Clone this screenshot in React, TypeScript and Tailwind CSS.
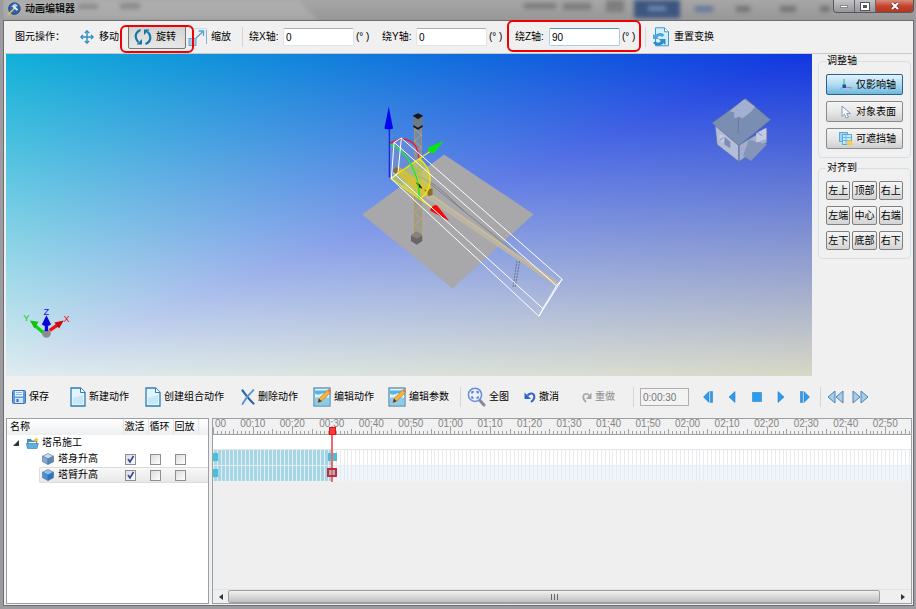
import { useState, type ReactNode } from "react";
import clsx from "clsx";

/* ---------- icons ---------- */

const AppIcon = () => (
  <svg viewBox="0 0 14 14" className="h-3.5 w-3.5 shrink-0">
    <circle cx="7.4" cy="6.6" r="5.8" fill="#2e62ab" stroke="#1c3f7c" strokeWidth=".8" />
    <path d="M4 4.5 8 1.5l3 2-2 1.5Z" fill="#a9d2f2" />
    <path d="M1 13 8 5.5" stroke="#d6c26a" strokeWidth="1.8" />
    <path d="m6.6 3.2 4.6 4.2-1.5 1.4-4.4-4Z" fill="#e8eef6" />
  </svg>
);

const MoveIcon = () => (
  <svg viewBox="0 0 14 14" className="h-3.5 w-3.5 shrink-0" fill="none" stroke="#2b8fc2" strokeWidth="1.4">
    <path d="M7 1.2v11.6M1.2 7h11.6" />
    <path d="M4.9 2.9 7 .9l2.1 2M4.9 11.1l2.1 2 2.1-2M2.9 4.9.9 7l2 2.1M11.1 4.9l2 2.1-2 2.1" />
  </svg>
);

const RotateIcon = () => (
  <svg viewBox="0 0 18 18" className="h-[18px] w-[18px] shrink-0" fill="none" stroke="#1577a8" strokeWidth="2.2">
    <path d="M6.5 2C3 3.5 1.4 6.2 1.8 9.2c.3 2.3 1.2 3.8 2.6 5.1" />
    <path d="M11.5 16c3.5-1.500 5.100-4.200 4.700-7.200-.3-2.300-1.200-3.800-2.600-5.100" />
    <path d="M2.500 16.500h5.500v-5.500ZM15.500 1.500h-5.500v5.500Z" fill="#1577a8" stroke="none" />
  </svg>
);

const ScaleIcon = () => (
  <svg viewBox="0 0 20 20" className="h-5 w-5 shrink-0" fill="none">
    <path d="M1 1.5h17.5V17" stroke="#c3dcef" />
    <path d="M18.5 3v14" stroke="#7fb2dc" />
    <rect x="1" y="11.5" width="7" height="7" fill="#a5cdea" stroke="#6aa5d2" />
    <path d="M8 11 15 4.5M10.5 4h5v5" stroke="#5c9bd0" strokeWidth="1.3" />
  </svg>
);

const ResetIcon = () => (
  <svg viewBox="0 0 18 20" className="h-5 w-[18px] shrink-0">
    <path d="M3.5.8h9l4 4v14h-13Z" fill="#d3edfb" stroke="#3c9bd0" />
    <path d="M12.500.8v4h4" fill="#fff" stroke="#3c9bd0" />
    <path d="M1 12V7l2 1.500C5.500 5.500 9.500 5 12.500 8l-2.500 2C8.500 8.500 6.500 9 5.500 10.500L7 12Z" fill="#4aa6dc" />
    <path d="M13.500 12v6l-2-1.700C8.500 19.500 3.500 19.500 1 15.800l2.500-1.800c1.500 2.300 4 2 5.300.2L7 12Z" fill="#2f8dca" />
  </svg>
);

const AxisIcon = () => (
  <svg viewBox="0 0 14 14" className="h-3.5 w-3.5 shrink-0" fill="none">
    <path d="M5 1v7" stroke="#4cbf6e" strokeWidth="1.2" />
    <path d="M6 9l7 1" stroke="#d5707c" strokeWidth="1.2" />
    <path d="M4 9l-3 3" stroke="#7fb6e8" strokeWidth="1.2" />
    <rect x="3.5" y="6.5" width="3.5" height="3.5" fill="#1554b8" />
  </svg>
);

const CursorIcon = () => (
  <svg viewBox="0 0 14 14" className="h-3.5 w-3.5 shrink-0">
    <path d="M3 1v10.5l2.5-2.3 1.7 4 2.3-1-1.7-3.7H11.5Z" fill="#f5f8fc" stroke="#8a9bb5" />
  </svg>
);

const LayersIcon = () => (
  <svg viewBox="0 0 14 14" className="h-3.5 w-3.5 shrink-0">
    <rect x=".5" y=".5" width="8" height="9" fill="#9ed4f2" stroke="#5aaad6" />
    <rect x="3.5" y="2.5" width="9" height="10" fill="#c9e9fa" stroke="#5aaad6" />
    <path d="M4 5.5h8M4 8.5h8M7 3v9" stroke="#6fb9e0" />
    <circle cx="10.6" cy="11" r="2.8" fill="#f6cf52" />
  </svg>
);

const SaveIcon = () => (
  <svg viewBox="0 0 14 14" className="h-3.5 w-3.5 shrink-0">
    <rect x=".5" y=".5" width="13" height="13" rx="1" fill="#5c9be0" stroke="#3d73bd" />
    <rect x="3" y="1" width="8" height="5.500" fill="#e6f1fc" />
    <path d="M4 2.500h6M4 4.500h6" stroke="#8fb7e4" />
    <rect x="3" y="8" width="8" height="5" fill="#d5e6f7" />
    <rect x="4.500" y="9" width="2" height="3" fill="#3566ae" />
  </svg>
);

const PageIcon = () => (
  <svg viewBox="0 0 16 20" className="h-5 w-4 shrink-0">
    <path d="M1 1h9.5L15 5.5V19H1Z" fill="#e2f4fd" stroke="#2f7fb2" strokeWidth="1.3" />
    <path d="M3 17V11l10-3v9Z" fill="#c5e8f9" />
    <path d="M10.5 1v4.5H15" fill="#fff" stroke="#2f7fb2" />
  </svg>
);

const CrossIcon = () => (
  <svg viewBox="0 0 14 18" className="h-[18px] w-3.5 shrink-0" fill="none" strokeLinecap="round">
    <path d="M1.500 2.500c3 4 6 8.500 11 13" stroke="#2c65a8" strokeWidth="2.200" />
    <path d="M12.500 2C8 6 4.500 10.500 1.500 16" stroke="#5b94cf" strokeWidth="1.800" />
  </svg>
);

const EditIcon = () => (
  <svg viewBox="0 0 18 20" className="h-5 w-[18px] shrink-0">
    <rect x="1" y="1" width="16" height="18" fill="#dff3fc" stroke="#4a86ab" strokeWidth="1.2" />
    <path d="M2 3.5h14v3c-3 2-4-1-7 0s-4 2-7 0Z" fill="#55b4e2" />
    <path d="M2 11c3-2 5 1 8 0s4-1 6 0v7H2Z" fill="#8accea" />
    <path d="m5 15.5 1-4L14.5 3l2.7 2.7-8.5 8.5Z" fill="#f5b53c" stroke="#b9751c" strokeWidth=".6" />
    <path d="m14.5 3 2.7 2.7 1-1.2L15.600 2Z" fill="#e8735a" />
    <path d="m5 15.5 1-4 2.7 2.7Z" fill="#4b3a28" />
  </svg>
);

const FitIcon = () => (
  <svg viewBox="0 0 19 20" className="h-5 w-[19px] shrink-0" fill="none">
    <path d="m12 12.500 5 5.500" stroke="#858b96" strokeWidth="3" strokeLinecap="round" />
    <circle cx="8" cy="7.8" r="6.6" fill="#e9f1fd" stroke="#6a8fd4" strokeWidth="1.5" />
    <path d="M5 6.5V4.8h1.7M9.3 4.8H11v1.7M11 9.2V11H9.3M6.7 11H5V9.2" stroke="#3360c0" strokeWidth="1.2" />
  </svg>
);

const UndoIcon = () => (
  <svg viewBox="0 0 12 12" className="h-3 w-3 shrink-0" fill="none">
    <path d="M3.500 4.500C6 1.500 10 2 10.300 5.500c.2 2.500-1.300 4.300-3.300 5.500" stroke="#2f66cc" strokeWidth="2" />
    <path d="M.5 1.500v6.500H7Z" fill="#2f66cc" />
  </svg>
);

const RedoIcon = () => (
  <svg viewBox="0 0 10 12" className="h-3 w-2.5 shrink-0" fill="none">
    <path d="M7 4.500C5 1.700 1.500 2.500 1.300 5.500 1.200 8 2.500 9.800 4 11" stroke="#a5a5a5" strokeWidth="1.700" />
    <path d="M9.500 1.500V8H4Z" fill="#a5a5a5" />
  </svg>
);

const CubeIcon = ({ dark }: { dark?: boolean }) => (
  <svg viewBox="0 0 12 12" className="h-3 w-3 shrink-0" stroke="#4a7096" strokeWidth=".6">
    <path d="m6 .5 5.5 2.7L6 6 .5 3.2Z" fill={dark ? "#8cc1f2" : "#c8dcee"} />
    <path d="M.5 3.2 6 6v5.5L.5 8.7Z" fill={dark ? "#4a90d9" : "#86aace"} />
    <path d="M11.5 3.2 6 6v5.5l5.5-2.8Z" fill={dark ? "#2f74c0" : "#5e88b4"} />
  </svg>
);

const FolderIcon = () => (
  <svg viewBox="0 0 13 12" className="h-3 w-[13px] shrink-0">
    <path d="M1 2h4l1 1.5h5V11H1Z" fill="#3f8fbf" />
    <path d="M2.5 5H10v3H2.5Z" fill="#f2fafe" />
    <path d="M.3 6.5h12L11 11.5H1.5Z" fill="#5fb0da" stroke="#2b7cab" strokeWidth=".6" />
    <path d="m10.3 0 .8 1.7 1.8.3-1.3 1.2.3 1.9-1.6-.9-1.6.9.3-1.9L7.700 2l1.800-.3Z" fill="#fbc531" />
  </svg>
);

const Glyph = ({ d }: { d: string }) => (
  <svg viewBox="0 0 10 12" className="h-3 w-2.5" fill="#2a9df0" stroke="#1b72b8" strokeWidth=".5">
    <path d={d} />
  </svg>
);

const SkipIcon = ({ forward }: { forward?: boolean }) => (
  <svg viewBox="0 0 17 14" className="h-3.5 w-[17px]" fill="#a9cbea" stroke="#4a83b8" strokeLinejoin="round">
    <path d={forward ? "M1 1v12l7-6ZM9 1v12l7-6Z" : "M8 1v12L1 7ZM16 1v12L9 7Z"} />
  </svg>
);

/* ---------- small parts ---------- */

const Separator = () => <span className="h-5 w-px shrink-0 bg-[#d5d5d5]" />;

const TitleBar = () => (
  <header className="relative flex h-5 items-start justify-between overflow-hidden bg-linear-to-b from-[#a6a6a6] to-[#979797] pl-1">
    <svg
      viewBox="0 0 916 20"
      preserveAspectRatio="xMaxYMin slice"
      className="absolute inset-0 h-full w-full blur-[2px]"
      aria-hidden="true"
    >
      <path d="M0 0h300l20 20H0Z" fill="#b4b4b4" opacity=".6" />
      <path d="M80 4h20v5H80ZM122 3h20v6h-20Z" fill="#7c7c7c" opacity=".7" />
      <path d="M526 3h32v6h-32ZM565 3h28v7h-28ZM608 0h18v12h-18Z" fill="#6f6f6f" opacity=".7" />
      <path d="M636 0h46v18h-46Z" fill="#3d5680" />
      <path d="M650 6h18v5h-18Z" fill="#7187ab" />
      <path d="M697 6h18v6h-18Z" fill="#67799a" />
      <path d="M738 6h14v6h-14ZM782 6h16v6h-16ZM822 6h10v6h-10Z" fill="#757575" />
    </svg>
    <div className="relative flex h-[18px] items-center gap-1">
      <AppIcon />
      <h1 className="text-[10px] font-medium text-black">动画编辑器</h1>
    </div>
    <div className="relative flex h-[13px] overflow-hidden rounded-b border border-t-0 border-[#55555a]">
      <button
        aria-label="最小化"
        className="flex w-[21px] items-center justify-center border-r border-[#66666a] bg-linear-to-b from-[#c4c4c8] to-[#96969c]"
      >
        <span className="h-[3px] w-2 border border-[#888] bg-white" />
      </button>
      <button
        aria-label="最大化"
        className="flex w-[21px] items-center justify-center border-r border-[#66666a] bg-linear-to-b from-[#c4c4c8] to-[#96969c]"
      >
        <span className="h-[7px] w-2 border-2 border-white bg-[#555] outline outline-[#555]" />
      </button>
      <button
        aria-label="关闭"
        className="flex w-[37px] items-center justify-center bg-linear-to-b from-[#d98a7a] via-[#c5432d] to-[#b5371f]"
      >
        <svg viewBox="0 0 10 8" className="h-2 w-2.5" fill="none">
          <path d="m2 1 6 6M8 1 2 7" stroke="#5a3530" strokeWidth="3.2" />
          <path d="m2 1 6 6M8 1 2 7" stroke="#fff" strokeWidth="2" />
        </svg>
      </button>
    </div>
  </header>
);

const AngleField = ({ axis, value, active }: { axis: string; value: string; active?: boolean }) => (
  <div className="relative flex w-[124px] shrink-0 items-center">
    <label htmlFor={`angle-${axis}`} className="w-[34px]">
      绕{axis}轴:
    </label>
    <input
      id={`angle-${axis}`}
      defaultValue={value}
      className={clsx(
        "h-[18px] w-[71px] rounded-xs border bg-white px-0.5 font-['Liberation_Sans'] outline-none",
        active ? "border-[#a8cdea] border-t-[#5794bf]" : "border-[#e0e3e8] border-t-[#abadb3]"
      )}
    />
    <span className="pl-0.5 whitespace-pre">(° )</span>
    {active && (
      <span className="pointer-events-none absolute -top-2 -right-0.5 -bottom-1.5 -left-2 z-10 rounded-md border-2 border-[#f00000]" />
    )}
  </div>
);

const TransformBar = () => (
  <div className="flex h-[33px] shrink-0 items-center border-b border-[#c9c9c9] pl-2.5 whitespace-nowrap">
    <span className="w-[59px] shrink-0">图元操作：</span>
    <button className="flex h-6 w-[54px] shrink-0 items-center gap-[5px] px-1.5">
      <MoveIcon />
      移动
    </button>
    <div className="relative shrink-0">
      <button className="flex h-6 w-[58px] items-center gap-1 rounded-xs border border-[#777] bg-linear-to-b from-[#d4d4d4] to-[#e8e8e8] px-[5px] shadow-inner">
        <RotateIcon />
        旋转
      </button>
      <span className="pointer-events-none absolute top-0 -right-2 -bottom-1 -left-2 z-10 rounded-md border-2 border-[#f00000]" />
    </div>
    <button className="flex h-6 w-14 shrink-0 items-center gap-[3px] pl-0.5">
      <ScaleIcon />
      缩放
    </button>
    <Separator />
    <div className="flex shrink-0 gap-[9px] px-1.5">
      <AngleField axis="X" value="0" />
      <AngleField axis="Y" value="0" />
      <AngleField axis="Z" value="90" active />
    </div>
    <Separator />
    <button className="flex h-6 shrink-0 items-center gap-1 px-1.5">
      <ResetIcon />
      重置变换
    </button>
  </div>
);

/* ---------- 3D viewport ---------- */

// four corner colours blended over two triangles, split along the rising diagonal
const Sky = () => (
  <svg
    viewBox="0 0 100 100"
    preserveAspectRatio="none"
    shapeRendering="crispEdges"
    className="absolute inset-0 isolate h-full w-full"
    aria-hidden="true"
  >
    <defs>
      <linearGradient id="sky-diag" x1="0" y1="0" x2="1" y2="1">
        <stop offset="0" stopColor="#10b0d8" />
        <stop offset=".5" stopColor="#000" />
        <stop offset="1" stopColor="#d8d8c6" />
      </linearGradient>
      <linearGradient id="sky-right">
        <stop offset="0" stopColor="#000" />
        <stop offset="1" stopColor="#1036e0" />
      </linearGradient>
      <linearGradient id="sky-down" x2="0" y2="1">
        <stop offset="0" stopColor="#000" />
        <stop offset="1" stopColor="#dfecf0" />
      </linearGradient>
      <linearGradient id="sky-up" x2="0" y2="1">
        <stop offset="0" stopColor="#1036e0" />
        <stop offset="1" stopColor="#000" />
      </linearGradient>
      <linearGradient id="sky-left">
        <stop offset="0" stopColor="#dfecf0" />
        <stop offset="1" stopColor="#000" />
      </linearGradient>
    </defs>
    <path d="M0 0h100v100H0Z" fill="url(#sky-diag)" />
    <path d="M0 0h100L0 100Z" fill="url(#sky-right)" className="mix-blend-plus-lighter" />
    <path d="M0 0h100L0 100Z" fill="url(#sky-down)" className="mix-blend-plus-lighter" />
    <path d="M100 0v100H0Z" fill="url(#sky-up)" className="mix-blend-plus-lighter" />
    <path d="M100 0v100H0Z" fill="url(#sky-left)" className="mix-blend-plus-lighter" />
  </svg>
);

const Crane = () => (
  <g transform="translate(334 36) scale(.3333)" fill="none">
    <path d="M313 195 582 374 338 597 66 375Z" fill="#a1a5b8" />
    <path d="M313 195 582 374 338 597 66 375Z" fill="url(#ground)" />

    {/* mast */}
    <path d="M222 112h24v330h-24Z" fill="#8f9290" opacity=".55" />
    <path d="M224 112v325M244 112v325" stroke="#b79b4b" strokeWidth="3" opacity=".8" />
    <path
      d="m224 118 20 18-20 18 20 18-20 18 20 18-20 18 20 18-20 18 20 18-20 18 20 18-20 18 20 18-20 18 20 18-20 18 20 18"
      stroke="#c5a858"
      strokeWidth="2.5"
    />
    <path d="M220 82h28v30l-14 7-14-7Z" fill="#6e7a88" />
    <path d="m234 70 16 8-16 10-16-10ZM220 106l14 8 14-8v6l-14 8-14-8Z" fill="#171717" />
    <path d="m213 438 17-12 17 12v17l-17 11-17-11Z" fill="#69656a" />
    <path d="m213 438 17-12 17 12-17 9Z" fill="#89827c" />

    {/* jib */}
    <path d="M245 262 540 500" stroke="#7f8288" strokeWidth="3" />
    <path d="M232 260c60 20 90 60 140 105" stroke="#76777c" strokeWidth="2.5" />
    <path d="m255 300 398 276-4 14L250 320Z" fill="#bdb6a4" opacity=".9" />
    <path d="M255 303 652 583" stroke="#d8c88e" strokeWidth="3" strokeDasharray="7 3" />
    <path d="m540 515-13 78M532 515l-12 80" stroke="#6d7690" strokeWidth="3" strokeDasharray="7 2" />

    {/* gizmo */}
    <path d="M150 265V160c50-30 85 0 86 46Z" fill="#8090c8" opacity=".45" />
    <path d="m152 266 84-60c45 35 45 90 6 121Z" fill="#d2d84a" opacity=".6" />
    <path d="m162 237 14-6 70 48 32 18v20l-20 2-40-27-56-45Z" fill="#d9c030" opacity=".8" />
    <path d="m158 240 10-8 10 4-2 14-12 2ZM262 300l16-4v20l-14 4Z" fill="#8a6d33" />
    <path d="m230 280 8 4 8 12-8-3ZM254 302l8 4" fill="#221c10" stroke="#221c10" strokeWidth="2" />
    <path d="M152 266 290 172M152 266l130 92" stroke="#e5e512" strokeWidth="4" />
    <path d="M236 206c42 30 48 90 6 121" stroke="#f5e800" strokeWidth="4" />
    <path d="M150 162c45 20 88 80 88 164" stroke="#10f020" strokeWidth="4" />
    <path d="M148 162c50-30 88-6 88 44" stroke="#ef1530" strokeWidth="4" />
    <path d="M148 264V110" stroke="#1a2ad0" strokeWidth="4" />
    <path d="m146 50 13 66q-13 6-26 0Z" fill="#0505ee" />
    <path d="m312 153-30 38c-10 0-18-8-19-17Z" fill="#08e808" />
    <path d="m328 394-57-30c0-12 10-18 20-17Z" fill="#f50808" />

    {/* bounding box */}
    <g stroke="#fff" strokeWidth="3">
      <path d="M184 145 668 570M162 158 652 590M154 268 598 681M160 250 610 658" />
      <path d="m154 268 8-110 22-13-10 105-20 18M598 681l70-111M610 658l42-70 16-18M598 681l12-23" />
    </g>
  </g>
);

const House = () => (
  <g transform="translate(694 -4) scale(.3333)" stroke="#62718f" strokeWidth="2">
    <path d="m48 224 72 62v50l-66-52Z" fill="#b3bcd9" />
    <path d="m120 286 84-50v42l-84 58Z" fill="#a2adcf" />
    <path d="m150 270 54 14-48 50-24-16Z" fill="#8495b8" stroke="none" />
    <path d="m172 250 30-16v34l-30 10ZM60 255l18 2v22l-16-6Z" fill="#c3cae2" stroke="none" />
    <path d="m76 262 18 14v20l-18-12Z" fill="#7d8db2" stroke="none" />
    <path d="M39 220 140 146l75 64-95 78Z" fill="#7a8db3" />
    <path d="m92 184 44-36 32 22-10 14-28 22-10-6-14 6v-18Z" fill="#a3b0d2" stroke="none" />
    <path d="M118 206v46M120 288v46M62 272l12-10M190 258l-18-12" />
  </g>
);

const AxisTriad = () => (
  <g transform="translate(-6 236) scale(.3333)" className="font-['Liberation_Sans'] text-[28px]">
    <circle cx="136" cy="133" r="13" fill="#8c8c90" />
    <path d="M126 130 100 108" stroke="#10d010" strokeWidth="10" />
    <path d="m86 94 26 4-12 20Z" fill="#12c012" />
    <path d="m146 124 26-18" stroke="#f01010" strokeWidth="10" />
    <path d="m188 94-14 24-14-18Z" fill="#c80c0c" />
    <path d="M136 126V98" stroke="#0808f0" strokeWidth="10" />
    <path d="m136 78 14 28q-14 10-28 0Z" fill="#0606d8" />
    <text x="66" y="97" fill="#17c817">
      Y
    </text>
    <text x="127" y="76" fill="#1010f0">
      Z
    </text>
    <text x="187" y="98" fill="#f01010">
      X
    </text>
  </g>
);

const Viewport = () => (
  <main className="relative ml-px h-[322px] min-w-0 flex-1 overflow-hidden">
    <Sky />
    <svg viewBox="0 0 806 323" className="relative h-full w-full">
      <defs>
        <pattern id="ground" width="8" height="8" patternUnits="userSpaceOnUse" patternTransform="rotate(34)">
          <path d="M0 2h8M0 6h8" stroke="#b0aa9c" strokeWidth="2" />
        </pattern>
      </defs>
      <Crane />
      <House />
      <AxisTriad />
    </svg>
  </main>
);

/* ---------- right side ---------- */

const Group = ({ title, children }: { title: string; children: ReactNode }) => (
  <fieldset className="rounded border border-[#d3dfe6] px-[7px] pb-2">
    <legend className="h-3.5 px-px leading-[14px]">{title}</legend>
    {children}
  </fieldset>
);

const modes = [
  { label: "仅影响轴", icon: <AxisIcon />, active: true },
  { label: "对象表面", icon: <CursorIcon /> },
  { label: "可遮挡轴", icon: <LayersIcon /> },
];

const alignments = ["左上", "顶部", "右上", "左端", "中心", "右端", "左下", "底部", "右下"];

const SidePanel = () => (
  <aside className="flex w-[100px] shrink-0 flex-col gap-[3px] pr-px pl-1.5">
    <Group title="调整轴">
      <div className="flex flex-col gap-1.5 pt-1.5">
        {modes.map((mode) => (
          <button
            key={mode.label}
            className={clsx(
              "flex h-[21px] items-center justify-center gap-[3px] rounded-xs border pl-1.5",
              mode.active
                ? "border-[#2c628b] bg-linear-to-b from-[#e2f3fc] via-[#b0dcf3] to-[#6cb7dd]"
                : "border-[#8a8a8a] bg-linear-to-b from-[#f4f4f4] via-[#e8e8e8] to-[#cfcfcf]"
            )}
          >
            {mode.icon}
            {mode.label}
          </button>
        ))}
      </div>
    </Group>
    <Group title="对齐到">
      <div className="grid grid-cols-3 gap-x-0.5 gap-y-1.5 pt-1.5">
        {alignments.map((name) => (
          <button
            key={name}
            className="flex h-[19px] items-center justify-center rounded-xs border border-[#808080] bg-linear-to-b from-[#f6f6f6] to-[#d4d4d4]"
          >
            {name}
          </button>
        ))}
      </div>
    </Group>
  </aside>
);

/* ---------- action bar ---------- */

const Tool = ({
  icon,
  label,
  width,
  disabled,
}: {
  icon: ReactNode;
  label: string;
  width: string;
  disabled?: boolean;
}) => (
  <button
    disabled={disabled}
    className={clsx("flex h-6 shrink-0 items-center gap-[3px]", width, disabled && "text-[#8d8d8d]")}
  >
    {icon}
    {label}
  </button>
);

const playback = [
  { label: "上一帧", d: "M6 .5v11L.5 6ZM7.500.500h2v11h-2Z" },
  { label: "倒放", d: "M8 .5v11L2 6Z" },
  { label: "停止", d: "M.5 1.500h9v9h-9Z" },
  { label: "播放", d: "M2 .5v11L8 6Z" },
  { label: "下一帧", d: "M.5.500h2v11h-2ZM4 .5v11L9.500 6Z" },
];

const ActionBar = () => (
  <div className="flex h-[42px] shrink-0 items-center pl-[7px] whitespace-nowrap">
    <Tool icon={<SaveIcon />} label="保存" width="w-[58px]" />
    <Tool icon={<PageIcon />} label="新建动作" width="w-[75px]" />
    <Tool icon={<PageIcon />} label="创建组合动作" width="w-[96px]" />
    <Tool icon={<CrossIcon />} label="删除动作" width="w-[72px]" />
    <Tool icon={<EditIcon />} label="编辑动作" width="w-[75px]" />
    <Tool icon={<EditIcon />} label="编辑参数" width="w-[72px]" />
    <Separator />
    <span className="w-1.5 shrink-0" />
    <Tool icon={<FitIcon />} label="全图" width="w-[57px]" />
    <Tool icon={<UndoIcon />} label="撤消" width="w-[58px]" />
    <Tool icon={<RedoIcon />} label="重做" width="w-[51px]" disabled />
    <Separator />
    <input
      aria-label="时间"
      defaultValue="0:00:30"
      className="mx-1.5 h-[18px] w-[49px] shrink-0 border border-[#b0b0b0] bg-[#f3f3f3] px-0.5 font-['Liberation_Sans'] text-[#777] outline-none"
    />
    <div className="flex w-[125px] shrink-0 items-center justify-between pr-2.5 pl-2">
      {playback.map((item) => (
        <button key={item.label} aria-label={item.label}>
          <Glyph d={item.d} />
        </button>
      ))}
    </div>
    <Separator />
    <div className="flex shrink-0 gap-2 pl-1.5">
      <button aria-label="快退">
        <SkipIcon />
      </button>
      <button aria-label="快进">
        <SkipIcon forward />
      </button>
    </div>
  </div>
);

/* ---------- action tree ---------- */

const columns = ["激活", "循环", "回放"];

const TreeCheck = ({ label, initial }: { label: string; initial: boolean }) => {
  const [checked, setChecked] = useState(initial);
  return (
    <span className="relative block h-[11px] w-[11px]">
      <input
        type="checkbox"
        aria-label={label}
        checked={checked}
        onChange={() => setChecked(!checked)}
        className="block h-[11px] w-[11px] appearance-none border border-[#8e8f8f] bg-linear-to-br from-[#dcdcdc] to-white"
      />
      {checked && (
        <svg viewBox="0 0 11 11" className="pointer-events-none absolute inset-0" fill="none">
          <path d="m3 5 2 3 3.5-6" stroke="#3a4a9c" strokeWidth="1.7" />
        </svg>
      )}
    </span>
  );
};

const ActionTree = () => (
  <section className="ml-px w-[203px] shrink-0 border border-[#9aa0a8] bg-white">
    <table className="w-full table-fixed border-collapse text-left">
      <thead>
        <tr className="h-4 bg-linear-to-b from-white to-[#eeeff1]">
          <th className="p-0 pl-[3px] font-normal">名称</th>
          {columns.map((name) => (
            <th key={name} className="w-[25px] border-l border-[#e2e4e8] p-0 pl-px leading-4 font-normal">
              {name}
            </th>
          ))}
          <th className="w-2.5 border-l border-[#e2e4e8] p-0" />
        </tr>
      </thead>
      <tbody>
        <tr className="h-4">
          <td colSpan={5} className="p-0">
            <div className="flex h-4 items-center gap-[3px] pl-1.5">
              <svg viewBox="0 0 6 6" className="mr-1 h-1.5 w-1.5">
                <path d="M6 0v6H0Z" fill="#333" />
              </svg>
              <FolderIcon />
              塔吊施工
            </div>
          </td>
        </tr>
        {["塔身升高", "塔臂升高"].map((name, i) => (
          <tr key={name} className="h-4">
            <td className="p-0 pl-8">
              <div
                className={clsx(
                  "flex h-4 items-center gap-1 border-y border-l pl-0.5",
                  i === 1
                    ? "rounded-l-xs border-[#dcdcdc] bg-linear-to-b from-[#f8f8f8] to-[#e8e8e8]"
                    : "border-transparent"
                )}
              >
                <CubeIcon dark={i === 1} />
                {name}
              </div>
            </td>
            {[...columns, ""].map((col, c) => (
              <td key={col} className="p-0">
                <div
                  className={clsx(
                    "flex h-4 items-center border-y pl-0.5",
                    i === 1 ? "border-[#dcdcdc] bg-linear-to-b from-[#f8f8f8] to-[#e8e8e8]" : "border-transparent"
                  )}
                >
                  {col && <TreeCheck label={`${name} ${col}`} initial={c === 0} />}
                </div>
              </td>
            ))}
          </tr>
        ))}
      </tbody>
    </table>
  </section>
);

/* ---------- timeline ---------- */

const SECOND = 3.955;
const marks = Array.from({ length: 17 }, (_, i) => {
  const s = (i + 1) * 10;
  return `${String(Math.floor(s / 60)).padStart(2, "0")}:${String(s % 60).padStart(2, "0")}`;
});
const seconds = Array.from({ length: 180 }, (_, i) => i);
const at = (s: number) => Math.round(s * SECOND);

const tickHeight = (s: number) => (s % 10 === 0 ? 7 : s % 5 === 0 ? 5 : 3);

const Timeline = () => (
  <section className="ml-[3px] flex min-w-0 flex-1 flex-col border border-[#9aa0a8] bg-[#efefef]">
    <div className="relative h-[63px] overflow-hidden bg-[#f1f1f1]">
      <svg className="absolute inset-0 h-full w-full" shapeRendering="crispEdges">
        {seconds.map((s) => (
          <rect key={s} x={at(s)} y={15 - tickHeight(s)} width="1" height={tickHeight(s)} fill="#a2a2a2" />
        ))}
        <rect y="15" width="100%" height="1" fill="#a0a0a0" />
        <rect y="16" width="100%" height="31" fill="#fff" />
        <rect y="30" width="100%" height="1" fill="#e6e6e6" />
        <rect y="46" width="100%" height="16" fill="#eff5fc" />
        {seconds.map((s) => (
          <rect key={s} x={at(s)} y="31" width="1" height="31" fill={s < 30 ? "#e4eff3" : "#e8eaed"} />
        ))}
        {seconds.slice(0, 30).map((s) => (
          <rect key={s} x={at(s) + 1} y="31" width={at(s + 1) - at(s) - 1} height="31" fill="#a5d6e5" />
        ))}
        <rect y="46" width="100%" height="1" fill="#e6eef2" />
        <path d="M0 34h5v8H0ZM0 50h5v8H0Z" fill="#4dbdd8" />
        <rect x="115" y="34" width="9" height="8" fill="#4dbdd8" />
        <rect x="118" y="15" width="2" height="48" fill="#ee6a6a" />
        <rect x="115" y="50" width="8" height="7" fill="#8cc0cc" stroke="#d02838" strokeWidth="2" />
        <rect x="118" y="51" width="2" height="5" fill="#ee6a6a" />
        <rect x="116" y="8" width="6" height="7" fill="#ff3838" stroke="#d81818" />
      </svg>
      <div className="relative flex font-['Liberation_Sans'] leading-[9px] text-[#858585]">
        <span className="w-5 shrink-0 pl-0.5">00</span>
        <div className="grid w-[672px] shrink-0 grid-cols-17 text-center">
          {marks.map((mark) => (
            <span key={mark}>{mark}</span>
          ))}
        </div>
      </div>
    </div>
    <div className="flex-1" />
    <div className="flex h-3.5 items-stretch border-t border-[#e2e2e2]">
      <button aria-label="向左滚动" className="flex w-[15px] items-center justify-center">
        <svg viewBox="0 0 4 6" className="h-1.5 w-1">
          <path d="M4 0v6L0 3Z" fill="#333" />
        </svg>
      </button>
      <div className="flex flex-1 items-center justify-center gap-px rounded-xs border border-[#a0a0a0] bg-linear-to-b from-[#f2f2f2] to-[#bfbfc3]">
        <span className="h-1.5 w-px bg-[#666]" />
        <span className="mx-px h-1.5 w-px bg-[#666]" />
        <span className="h-1.5 w-px bg-[#666]" />
      </div>
      <button aria-label="向右滚动" className="flex w-[31px] items-center justify-end pr-1.5">
        <svg viewBox="0 0 4 6" className="h-1.5 w-1">
          <path d="M0 0v6l4-3Z" fill="#333" />
        </svg>
      </button>
    </div>
  </section>
);

const App = () => (
  <div className="flex min-h-screen flex-col bg-[#9b9ba0] pr-0.5 pb-[3px] pl-[3px] font-['Liberation_Sans','Noto_Sans_CJK_SC',sans-serif] text-[10px] leading-[14px] text-black">
    <TitleBar />
    <div className="flex flex-1 flex-col border border-[#6e6e72] bg-[#f0f0f0] pr-px pb-px pl-px">
      <TransformBar />
      <div className="flex shrink-0">
        <Viewport />
        <SidePanel />
      </div>
      <ActionBar />
      <div className="flex min-h-[185px] flex-1">
        <ActionTree />
        <Timeline />
      </div>
    </div>
  </div>
);

export default App;
